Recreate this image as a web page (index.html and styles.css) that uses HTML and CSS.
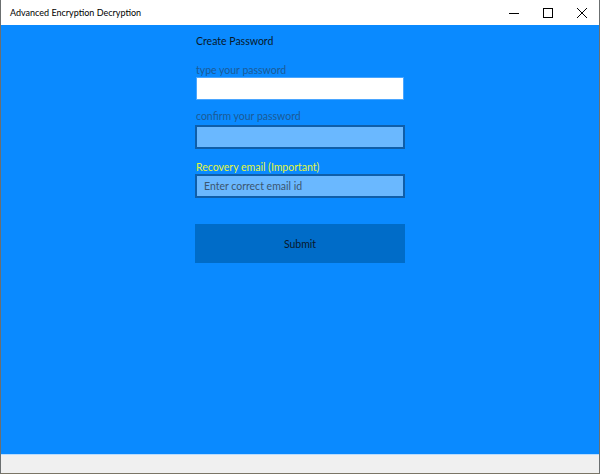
FILE: index.html
```html
<!DOCTYPE html>
<html lang="en">
<head>
    <meta charset="UTF-8">
    <title>Advanced Encryption Decryption</title>
    <link rel="stylesheet" href="styles.css">
</head>
<body>
    <div class="window">
        <div class="titlebar">
            <span class="title">Advanced Encryption Decryption</span>
            <div class="controls">
                <span class="ctl">
                    <svg width="10" height="10" viewBox="0 0 10 10"><path d="M0 5.5h10" stroke="#000" stroke-width="1"/></svg>
                </span>
                <span class="ctl">
                    <svg width="10" height="10" viewBox="0 0 10 10"><rect x="0.5" y="0.5" width="9" height="9" fill="none" stroke="#000" stroke-width="1"/></svg>
                </span>
                <span class="ctl">
                    <svg width="10" height="10" viewBox="0 0 10 10"><path d="M0 0L10 10M10 0L0 10" stroke="#000" stroke-width="1"/></svg>
                </span>
            </div>
        </div>
        <div class="content">
            <form class="form">
                <div class="heading">Create Password</div>
                <label class="label label-first" for="pw">type your password</label>
                <input class="field field-white" type="password" id="pw">
                <label class="label label-second" for="pw2">confirm your password</label>
                <input class="field" type="password" id="pw2">
                <label class="label label-yellow" for="mail">Recovery email (Important)</label>
                <input class="field" type="text" id="mail" placeholder="Enter correct email id">
                <button class="submit" type="button">Submit</button>
            </form>
        </div>
        <div class="statusbar"></div>
    </div>
</body>
</html>
```
FILE: styles.css
```css
body {
    margin: 0;
    padding: 0;
    font-family: 'Lato', 'Open Sans', sans-serif;
    background: #ffffff;
}

.window {
    width: 600px;
    height: 474px;
    box-sizing: border-box;
    display: flex;
    flex-direction: column;
    border-left: 1px solid #6b6f70;
    border-right: 1px solid #6b6f70;
    border-bottom: 1px solid #7a7566;
}

.titlebar {
    height: 25px;
    flex: none;
    background: #ffffff;
    display: flex;
    align-items: center;
    justify-content: space-between;
}
.title {
    font-size: 9px;
    color: #000000;
    padding-left: 9px;
}
.controls {
    display: flex;
    height: 100%;
}
.ctl {
    width: 34px;
    display: flex;
    align-items: center;
    justify-content: center;
}

.content {
    flex: 1;
    background: #0a8aff;
    display: flex;
    justify-content: center;
}
.form {
    width: 210px;
    display: flex;
    flex-direction: column;
    padding-top: 9px;
}
.heading {
    font-size: 10.5px;
    line-height: 14px;
    color: #08182b;
    padding-left: 1px;
}
.label {
    font-size: 10.5px;
    line-height: 14px;
    color: #1c5a96;
    padding-left: 1px;
}
.label-first {
    margin-top: 15px;
}
.label-second {
    margin-top: 9px;
    margin-bottom: 2px;
}
.label-yellow {
    color: #e4f53a;
    margin-top: 11px;
}
.field {
    box-sizing: border-box;
    height: 24px;
    margin: 0;
    border: 2px solid #0f5ea9;
    background: #6ab8ff;
    font-family: inherit;
    font-size: 10.5px;
    padding: 0 7px;
    color: #203040;
}
.field::placeholder {
    color: #3b5670;
}
.field-white {
    margin-left: 1px;
    margin-right: 1px;
    height: 23px;
    border: 1px solid #4aa6ff;
    background: #ffffff;
}
.submit {
    margin-top: 26px;
    height: 39px;
    border: none;
    background: #006cc8;
    font-family: inherit;
    font-size: 10.5px;
    color: #08182b;
}

.statusbar {
    height: 18px;
    flex: none;
    background: #f0f0f0;
    border-top: 1px solid #b8dcff;
}
```
